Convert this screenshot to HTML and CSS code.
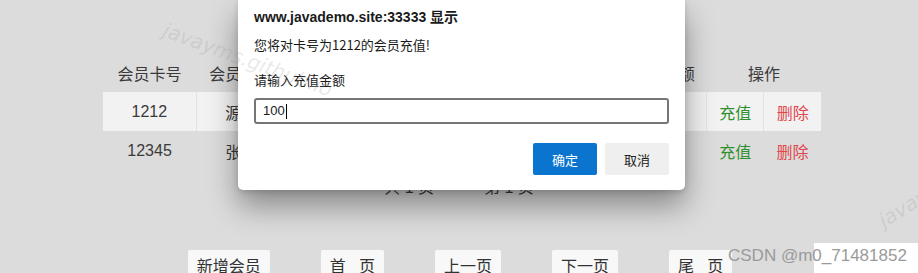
FILE: index.html
```html
<!DOCTYPE html>
<html lang="zh-CN">
<head>
  <meta charset="UTF-8" />
  <meta name="viewport" content="width=device-width, initial-scale=1.0"/>
  <title>会员管理</title>
  <link rel="stylesheet" href="styles.css">
</head>
<body>
  <div class="page">
    <table class="member-table">
      <colgroup>
        <col class="col-card">
        <col class="col-name">
        <col class="col-phone">
        <col class="col-time">
        <col class="col-money">
        <col class="col-op">
        <col class="col-op">
      </colgroup>
      <thead>
        <tr>
          <th>会员卡号</th>
          <th>会员姓名</th>
          <th>手机号码</th>
          <th>注册时间</th>
          <th>余额</th>
          <th colspan="2">操作</th>
        </tr>
      </thead>
      <tbody>
        <tr class="odd">
          <td>1212</td>
          <td>源码</td>
          <td>13800000000</td>
          <td>2023-05-01</td>
          <td>0</td>
          <td class="op-charge">充值</td>
          <td class="op-delete">删除</td>
        </tr>
        <tr>
          <td>12345</td>
          <td>张三</td>
          <td>13900000000</td>
          <td>2023-05-02</td>
          <td>0</td>
          <td class="op-charge">充值</td>
          <td class="op-delete">删除</td>
        </tr>
      </tbody>
    </table>

    <div class="page-info">
      <span>共 1 页</span>
      <span>第 1 页</span>
    </div>

    <div class="btn-group">
      <button class="page-btn">新增会员</button>
      <button class="page-btn">首&nbsp;&nbsp;&nbsp;页</button>
      <button class="page-btn">上一页</button>
      <button class="page-btn">下一页</button>
      <button class="page-btn">尾&nbsp;&nbsp;&nbsp;页</button>
    </div>
  </div>

  <div class="prompt-dialog">
    <div class="prompt-title">www.javademo.site:33333 显示</div>
    <div class="prompt-msg">您将对卡号为1212的会员充值!</div>
    <div class="prompt-label">请输入充值金额</div>
    <div class="prompt-input">100<span class="caret"></span></div>
    <div class="prompt-actions">
      <button class="ok-btn">确定</button>
      <button class="cancel-btn">取消</button>
    </div>
  </div>

  <div class="mark mark-top">javayms.github.io</div>
  <div class="mark mark-bottom">javay</div>
  <div class="csdn-box"></div>
  <div class="csdn-mark">CSDN @m0_71481852</div>
</body>
</html>
```

FILE: styles.css
```css
body {
    margin: 0;
    background-color: #dcdcdc;
    font-family: "Liberation Sans", Arial, "Noto Sans CJK SC", sans-serif;
    color: #3a3a3a;
    height: 273px;
    overflow: hidden;
}
.page {
    width: 718px;
    margin-left: 103px;
    padding-top: 54px;
}
.member-table {
    width: 718px;
    border-collapse: collapse;
    table-layout: fixed;
    font-size: 16px;
}
.col-card { width: 93px; }
.col-name { width: 90px; }
.col-phone { width: 150px; }
.col-time { width: 214px; }
.col-money { width: 56px; }
.col-op { width: 57px; }
.member-table th, .member-table td {
    height: 38px;
    padding: 0;
    text-align: center;
    font-weight: normal;
    white-space: nowrap;
    overflow: hidden;
}
.member-table tbody td {
    padding-top: 1px;
}
.member-table tr.odd td {
    background-color: #f2f2f2;
    border-left: 1px solid #e2e2e2;
}
.member-table tr.odd td:first-child {
    border-left: none;
}
.op-charge {
    color: #2f8f2f;
}
.op-delete {
    color: #e0474c;
}
.page-info {
    display: flex;
    justify-content: center;
    gap: 50px;
    margin-top: 8px;
    margin-right: 6px;
    font-size: 16px;
    line-height: 20px;
}
.btn-group {
    display: flex;
    justify-content: center;
    gap: 51px;
    margin-top: 52px;
    margin-right: 4px;
}
.page-btn {
    background-color: #f8f8f8;
    border: none;
    border-radius: 2px;
    padding: 0 9px;
    height: 34px;
    line-height: 32px;
    font-size: 16px;
    font-family: "Liberation Sans", Arial, "Noto Sans CJK SC", sans-serif;
    color: #333;
}

/* browser prompt on top of the page */
.prompt-dialog {
    position: absolute;
    left: 238px;
    top: 0;
    width: 447px;
    box-sizing: border-box;
    padding: 7px 16px 15px;
    background-color: #fff;
    border-radius: 0 0 5px 5px;
    box-shadow: 0 16px 30px rgba(0, 0, 0, 0.38), 0 2px 6px rgba(0, 0, 0, 0.14);
    font-family: "Noto Sans CJK SC", "Liberation Sans", sans-serif;
    color: #1a1a1a;
}
.prompt-title {
    font-family: "Liberation Sans", "Noto Sans CJK SC", sans-serif;
    font-weight: bold;
    font-size: 14px;
    line-height: 20px;
}
.prompt-msg {
    margin-top: 8px;
    font-size: 13px;
    line-height: 20px;
}
.prompt-label {
    margin-top: 15px;
    font-size: 13px;
    line-height: 20px;
}
.prompt-input {
    margin-top: 8px;
    height: 26px;
    box-sizing: border-box;
    border: 2px solid #767676;
    border-radius: 3px;
    padding-left: 7px;
    font-family: "Liberation Sans", sans-serif;
    font-size: 13px;
    line-height: 22px;
    display: flex;
    align-items: center;
}
.caret {
    display: inline-block;
    width: 1px;
    height: 15px;
    background-color: #000;
    margin-left: 1px;
}
.prompt-actions {
    display: flex;
    justify-content: flex-end;
    gap: 8px;
    margin-top: 19px;
}
.ok-btn, .cancel-btn {
    width: 64px;
    height: 32px;
    border: none;
    border-radius: 2px;
    font-size: 13px;
    font-family: "Noto Sans CJK SC", sans-serif;
}
.ok-btn {
    background-color: #0a74ce;
    color: #fff;
}
.cancel-btn {
    background-color: #efefef;
    color: #222;
}

/* watermarks */
.mark {
    position: absolute;
    font-family: "DejaVu Sans", sans-serif;
    font-style: italic;
    font-size: 20px;
    color: rgba(150, 150, 150, 0.22);
    white-space: nowrap;
}
.mark-top {
    left: 168px;
    top: 18px;
    transform: rotate(20deg);
    transform-origin: left top;
}
.mark-bottom {
    left: 874px;
    top: 212px;
    transform: rotate(-32deg);
    transform-origin: left top;
}
.csdn-box {
    position: absolute;
    left: 814px;
    top: 243px;
    width: 104px;
    height: 30px;
    background-color: #fff;
}
.csdn-mark {
    position: absolute;
    left: 728px;
    top: 246px;
    font-family: "Liberation Sans", sans-serif;
    font-size: 17px;
    color: #9a9a9a;
    white-space: nowrap;
}
```
